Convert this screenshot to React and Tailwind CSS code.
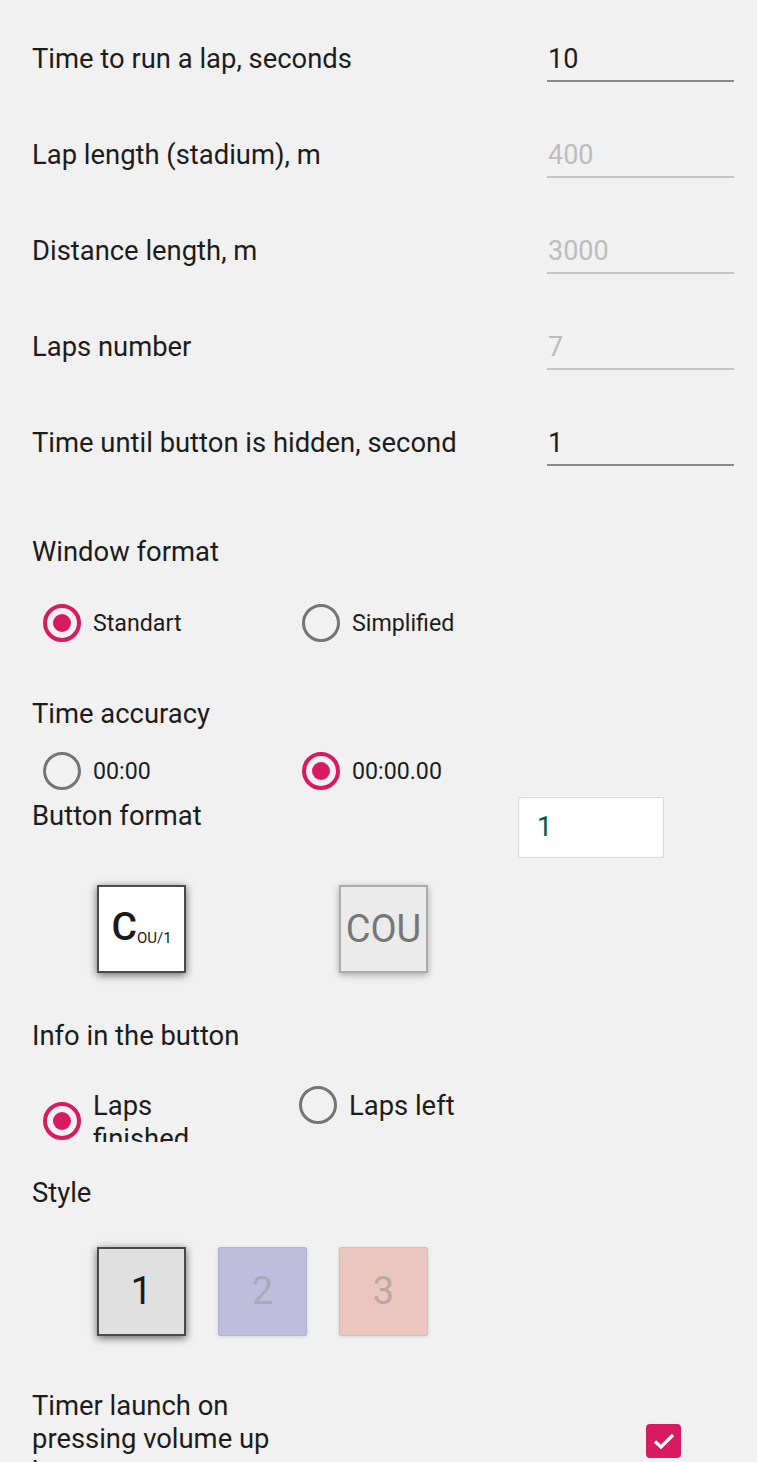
import React from "react";

const font = { fontFamily: "Roboto, 'Noto Sans', sans-serif" };

function Field({ label, value, disabled }) {
    return (
        <div className="flex items-center h-[96px] pr-[23px]">
            <div className="text-[27.4px] text-[#1c1c1c]">{label}</div>
            <div className={"ml-auto w-[187px] h-[44px] flex items-center pl-[1px] text-[27px] border-b-2 " + (disabled ? "text-[#bdbdbd] border-[#c4c4c4]" : "text-[#1c1c1c] border-[#8a8a8a]")}>
                {value}
            </div>
        </div>
    );
}

function Radio({ checked }) {
    return checked ? (
        <div className="w-[38px] h-[38px] shrink-0 rounded-full border-[4px] border-[#d81b60] flex items-center justify-center">
            <div className="w-[18px] h-[18px] rounded-full bg-[#d81b60]"></div>
        </div>
    ) : (
        <div className="w-[38px] h-[38px] shrink-0 rounded-full border-[3.5px] border-[#757575]"></div>
    );
}

function RadioRow({ a, b, checkedA }) {
    return (
        <div className="flex items-center pl-[11px]">
            <div className="flex items-center gap-[12px] w-[259px]">
                <Radio checked={checkedA} />
                <span className="text-[23.2px] text-[#1c1c1c]">{a}</span>
            </div>
            <div className="flex items-center gap-[12px]">
                <Radio checked={!checkedA} />
                <span className="text-[23.2px] text-[#1c1c1c]">{b}</span>
            </div>
        </div>
    );
}

export default function App() {
    return (
        <div className="w-[757px] h-[1462px] overflow-hidden bg-[#f1f1f1] pl-[32px]" style={font}>
            <div className="pt-[12px]">
                <Field label="Time to run a lap, seconds" value="10" />
                <Field label="Lap length (stadium), m" value="400" disabled />
                <Field label="Distance length, m" value="3000" disabled />
                <Field label="Laps number" value="7" disabled />
                <Field label="Time until button is hidden, second" value="1" />
            </div>

            <div className="mt-[44px] text-[27.4px] leading-[33px] text-[#1c1c1c]">Window format</div>
            <div className="mt-[35px]">
                <RadioRow a="Standart" b="Simplified" checkedA={true} />
            </div>

            <div className="mt-[56px] text-[27.4px] leading-[33px] text-[#1c1c1c]">Time accuracy</div>
            <div className="mt-[21px]">
                <RadioRow a="00:00" b="00:00.00" checkedA={false} />
            </div>

            <div className="mt-[7px] flex items-start">
                <div className="text-[27.4px] leading-[33px] text-[#1c1c1c] pt-[3px]">Button format</div>
                <div className="ml-auto mr-[93px] w-[146px] h-[61px] bg-white border border-[#dcdcdc] shadow-[inset_0_0_3px_rgba(0,0,0,0.08)] flex items-center pl-[18px] text-[27px] text-[#00574b]">1</div>
            </div>

            <div className="mt-[27px] flex pl-[65px] gap-[153px]">
                <div className="w-[89px] h-[88px] bg-white border-2 border-[#4a4a4a] shadow-[0_2px_8px_rgba(0,0,0,0.6)] flex items-end justify-center pb-[24px]">
                    <span className="text-[39px] font-medium leading-none text-[#1a1a1a]">C</span>
                    <span className="text-[15px] leading-none text-[#1a1a1a] mb-[1px]">OU/1</span>
                </div>
                <div className="w-[89px] h-[88px] bg-[#ebebeb] border-2 border-[#acacac] shadow-[0_2px_7px_rgba(0,0,0,0.3)] flex items-center justify-center">
                    <span className="text-[38px] leading-none text-[#777777]">COU</span>
                </div>
            </div>

            <div className="mt-[47px] text-[27.4px] leading-[33px] text-[#1c1c1c]">Info in the button</div>
            <div className="mt-[37px] flex items-start pl-[11px]">
                <div className="flex items-start gap-[12px] w-[256px]">
                    <div className="mt-[12px]"><Radio checked={true} /></div>
                    <div className="w-[120px] h-[52px] overflow-hidden text-[27.4px] leading-[33px] text-[#1c1c1c]">Laps finished</div>
                </div>
                <div className="flex items-start gap-[12px]">
                    <div className="-mt-[4px]"><Radio checked={false} /></div>
                    <div className="text-[27.4px] leading-[33px] text-[#1c1c1c]">Laps left</div>
                </div>
            </div>

            <div className="mt-[35px] text-[27.4px] leading-[33px] text-[#1c1c1c]">Style</div>
            <div className="mt-[37px] flex pl-[65px] gap-[32px]">
                <div className="w-[89px] h-[89px] bg-[#e0e0e0] border-2 border-[#4a4a4a] shadow-[0_2px_8px_rgba(0,0,0,0.6)] flex items-center justify-center text-[38px] text-[#1a1a1a]">1</div>
                <div className="w-[89px] h-[89px] bg-[#bebedc] border border-[#b4b4d0] rounded-[2px] shadow-[0_1px_4px_rgba(0,0,0,0.12)] flex items-center justify-center text-[38px] text-[#a9a9b8]">2</div>
                <div className="w-[89px] h-[89px] bg-[#ebc6be] border border-[#dcbab2] rounded-[2px] shadow-[0_1px_4px_rgba(0,0,0,0.12)] flex items-center justify-center text-[38px] text-[#b9a9a4]">3</div>
            </div>

            <div className="mt-[54px] flex items-start">
                <div className="w-[260px] text-[27.4px] leading-[33px] text-[#1c1c1c]">Timer launch on pressing volume up button</div>
                <div className="ml-[354px] mt-[34px] w-[35px] h-[34px] rounded-[4px] bg-[#d81b60] flex items-center justify-center">
                    <svg width="24" height="20" viewBox="0 0 24 20" fill="none">
                        <path d="M3 10.5 L9 16 L21 4" stroke="white" strokeWidth="3.2" />
                    </svg>
                </div>
            </div>
        </div>
    );
}
